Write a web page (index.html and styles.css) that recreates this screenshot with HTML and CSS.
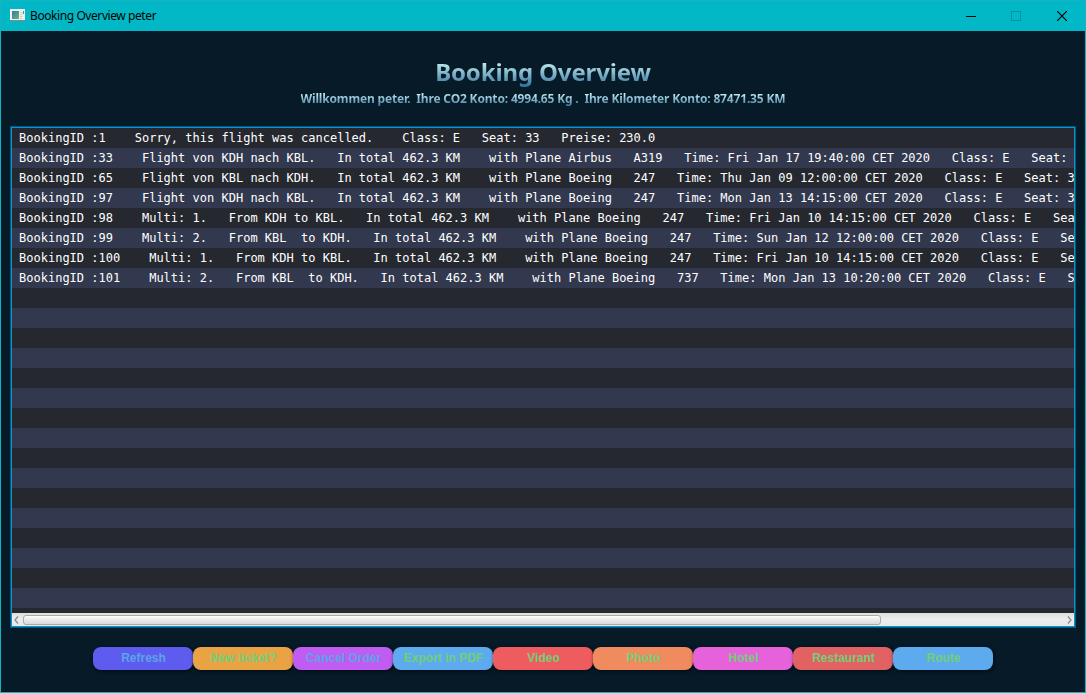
FILE: index.html
```html
<!DOCTYPE html>
<html lang="de">
<head>
<meta charset="utf-8">
<title>Booking Overview peter</title>
<link rel="stylesheet" href="styles.css">
</head>
<body>
<div class="window">
  <header class="titlebar">
    <svg class="app-icon" width="15" height="13" viewBox="0 0 15 13">
      <defs><linearGradient id="pic" x1="0" y1="0" x2="1" y2="1"><stop offset="0" stop-color="#3f79a0"/><stop offset="1" stop-color="#5fb47c"/></linearGradient></defs>
      <rect width="15" height="12" fill="#f1f1f1"/>
      <rect y="11" width="15" height="1" fill="#8b8583"/>
      <rect x="2" y="2" width="7" height="8" fill="url(#pic)"/>
      <path d="M10 3.500h2.500M10 5.500h2.500M10 7.500h2.500M10 9.500h2.500" stroke="#c9cdcf"/>
      <path d="M13.500 2v3" stroke="#3c9a8e"/>
    </svg>
    <span class="caption">Booking Overview peter</span>
    <div class="controls">
      <svg width="10" height="10" viewBox="0 0 10 10"><path d="M0 5.500h10" stroke="#000"/></svg>
      <svg width="10" height="10" viewBox="0 0 10 10"><path d="M.5 .5h9v9h-9z" fill="none" stroke="#0092a0"/></svg>
      <svg width="10" height="10" viewBox="0 0 10 10"><path d="M0 0l10 10M10 0L0 10" stroke="#000" stroke-width="1.200"/></svg>
    </div>
  </header>
  <main class="content">
    <h1 class="title">Booking Overview</h1>
    <p class="subtitle">Willkommen peter.  Ihre CO2 Konto: 4994.65 Kg .  Ihre Kilometer Konto: 87471.35 KM</p>
    <section class="list">
      <div class="rows">
        <div class="row">BookingID :1    Sorry, this flight was cancelled.    Class: E   Seat: 33   Preise: 230.0</div>
        <div class="row">BookingID :33    Flight von KDH nach KBL.   In total 462.3 KM    with Plane Airbus   A319   Time: Fri Jan 17 19:40:00 CET 2020   Class: E   Seat:</div>
        <div class="row">BookingID :65    Flight von KBL nach KDH.   In total 462.3 KM    with Plane Boeing   247   Time: Thu Jan 09 12:00:00 CET 2020   Class: E   Seat: 3</div>
        <div class="row">BookingID :97    Flight von KDH nach KBL.   In total 462.3 KM    with Plane Boeing   247   Time: Mon Jan 13 14:15:00 CET 2020   Class: E   Seat: 3</div>
        <div class="row">BookingID :98    Multi: 1.   From KDH to KBL.   In total 462.3 KM    with Plane Boeing   247   Time: Fri Jan 10 14:15:00 CET 2020   Class: E   Sea</div>
        <div class="row">BookingID :99    Multi: 2.   From KBL  to KDH.   In total 462.3 KM    with Plane Boeing   247   Time: Sun Jan 12 12:00:00 CET 2020   Class: E   Se</div>
        <div class="row">BookingID :100    Multi: 1.   From KDH to KBL.   In total 462.3 KM    with Plane Boeing   247   Time: Fri Jan 10 14:15:00 CET 2020   Class: E   Se</div>
        <div class="row">BookingID :101    Multi: 2.   From KBL  to KDH.   In total 462.3 KM    with Plane Boeing   737   Time: Mon Jan 13 10:20:00 CET 2020   Class: E   S</div>
      </div>
      <div class="scrollbar">
        <svg class="arrow" width="5" height="8" viewBox="0 0 5 8"><path d="M4 .5L1 4l3 3.500" fill="none" stroke="#8d8d8d" stroke-width="1.300"/></svg>
        <div class="track"><div class="thumb"></div></div>
        <svg class="arrow" width="5" height="8" viewBox="0 0 5 8"><path d="M1 .5L4 4 1 7.500" fill="none" stroke="#8d8d8d" stroke-width="1.300"/></svg>
      </div>
    </section>
    <nav class="actions">
      <button class="btn refresh">Refresh</button>
      <button class="btn ticket">New ticket?</button>
      <button class="btn cancel">Cancel Order</button>
      <button class="btn export">Export in PDF</button>
      <button class="btn video">Video</button>
      <button class="btn photo">Photo</button>
      <button class="btn hotel">Hotel</button>
      <button class="btn restaurant">Restaurant</button>
      <button class="btn route">Route</button>
    </nav>
  </main>
</div>
</body>
</html>
```
FILE: styles.css
```css
* { box-sizing: border-box; }
body { margin: 0; overflow: hidden; }
.window {
  width: 1086px;
  height: 693px;
  display: flex;
  flex-direction: column;
  border: 1px solid #16b3c2;
  background: #061a28;
}
.titlebar {
  height: 30px;
  flex: none;
  display: flex;
  align-items: center;
  padding: 0 18px 0 9px;
  background: #02b8c6;
}
.app-icon { margin-right: 5px; margin-top: -1px; }
.caption {
  font: 12px/16px "Noto Sans", sans-serif;
  letter-spacing: -0.42px;
  color: #000;
}
.controls { margin-left: auto; display: flex; gap: 36px; }
.controls svg:first-child { margin-right: -1px; }
.content {
  flex: 1;
  display: flex;
  flex-direction: column;
  align-items: center;
  padding: 24px 9px 0 9px;
}
.title, .subtitle {
  margin: 0;
  white-space: pre;
  font-family: "Noto Sans", sans-serif;
  font-weight: 700;
  color: transparent;
  -webkit-background-clip: text;
  background-clip: text;
}
.title {
  font-size: 24px;
  line-height: 34px;
  letter-spacing: -0.15px;
  background-image: linear-gradient(#c4f0f0 20%, #3673a0 92%);
}
.subtitle {
  margin-top: 1px;
  font-size: 12px;
  line-height: 18px;
  letter-spacing: -0.17px;
  background-image: linear-gradient(#c4f0f0 20%, #3673a0 92%);
}
.list {
  width: 100%;
  height: 502px;
  margin-top: 18px;
  border: 1px solid #075577;
  outline: 1px solid #0496d2;
  outline-offset: -2px;
  padding: 1px;
  display: flex;
  flex-direction: column;
}
.rows {
  flex: 1;
  overflow: hidden;
  background: repeating-linear-gradient(#25282f 0 20px, #32384d 20px 40px);
}
.row {
  height: 20px;
  padding-left: 7px;
  font: 12px/20px "DejaVu Sans Mono", monospace;
  letter-spacing: 0.006px;
  white-space: pre;
  color: #fff;
}
.scrollbar {
  height: 13px;
  flex: none;
  display: flex;
  align-items: center;
  padding: 0 2px;
  gap: 4px;
  background: linear-gradient(#dedede, #ededed 45%, #e8e8e8);
}
.track { flex: 1; }
.thumb {
  width: 858px;
  height: 10px;
  border: 1px solid #aaa;
  border-radius: 3px;
  background: linear-gradient(#fff, #efefef 30%, #dadada);
}
.actions { display: flex; width: 900px; margin-top: 19px; }
.btn {
  width: 100px;
  height: 23px;
  flex: none;
  border: 0;
  border-radius: 8px;
  padding: 0 0 0 1px;
  font: 700 12px/23px "Liberation Sans", sans-serif;
  color: #73cf77;
  box-shadow: 1px 1px 4px rgba(0, 0, 0, .6);
}
.refresh { background: #5e5cee; color: #5aa4e8; }
.ticket { background: #e9a345; }
.cancel { background: #c05cf1; color: #5aa4e8; }
.export { background: #5dabee; }
.video { background: #ef5c5f; }
.photo { background: #f08b5f; }
.hotel { background: #e562da; }
.restaurant { background: #e26264; }
.route { background: #5dabee; }
```
